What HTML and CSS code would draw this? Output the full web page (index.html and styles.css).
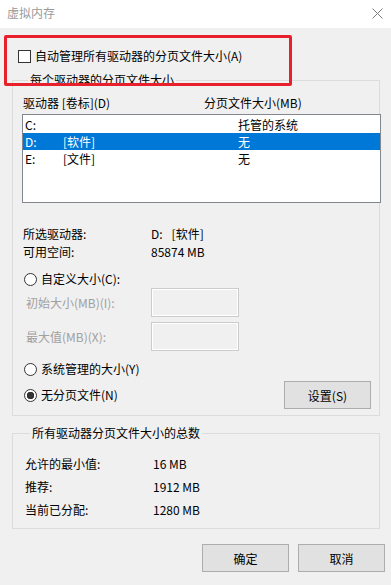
FILE: index.html
```html
<!DOCTYPE html>
<html lang="zh-CN">
<head>
<meta charset="UTF-8">
<title>虚拟内存</title>
<link rel="stylesheet" href="styles.css">
</head>
<body>
<div class="dialog">
    <div class="title-bar">
        <span class="title">虚拟内存</span>
        <svg class="close-btn" width="11" height="11" viewBox="0 0 11 11">
            <path d="M0.5 0.5 L10.5 10.5 M10.5 0.5 L0.5 10.5" stroke="#7a7a7a" stroke-width="1" fill="none"/>
        </svg>
    </div>

    <div class="content">
        <div class="check-row">
            <span class="checkbox"></span>
            <span>自动管理所有驱动器的分页文件大小(A)</span>
        </div>

        <div class="group group-drives">
            <span class="group-title">每个驱动器的分页文件大小</span>

            <div class="list-head">
                <span>驱动器 [卷标](D)</span>
                <span>分页文件大小(MB)</span>
            </div>
            <ul class="drive-list">
                <li><span>C:</span><span></span><span>托管的系统</span></li>
                <li class="active"><span>D:</span><span>[软件]</span><span>无</span></li>
                <li><span>E:</span><span>[文件]</span><span>无</span></li>
            </ul>

            <div class="info">
                <span>所选驱动器:</span><span>D:<span class="volume">[软件]</span></span>
                <span>可用空间:</span><span>85874 MB</span>
            </div>

            <div class="radio-row first">
                <span class="radio"></span>
                <span>自定义大小(C):</span>
            </div>
            <div class="size-row">
                <span class="size-label">初始大小(MB)(I):</span>
                <span class="size-input"></span>
            </div>
            <div class="size-row">
                <span class="size-label">最大值(MB)(X):</span>
                <span class="size-input"></span>
            </div>
            <div class="radio-row">
                <span class="radio"></span>
                <span>系统管理的大小(Y)</span>
            </div>
            <div class="radio-row last">
                <div class="radio-label">
                    <span class="radio checked"></span>
                    <span>无分页文件(N)</span>
                </div>
                <button class="btn btn-set">设置(S)</button>
            </div>
        </div>

        <div class="group group-total">
            <span class="group-title">所有驱动器分页文件大小的总数</span>
            <div class="total">
                <span>允许的最小值:</span><span>16 MB</span>
                <span>推荐:</span><span>1912 MB</span>
                <span>当前已分配:</span><span>1280 MB</span>
            </div>
        </div>

        <div class="footer">
            <button class="btn">确定</button>
            <button class="btn">取消</button>
        </div>
    </div>

    <!-- 红色标注框 -->
    <div class="mark"></div>
</div>
</body>
</html>
```

FILE: styles.css
```css
* {
    margin: 0;
    padding: 0;
    box-sizing: border-box;
}
ul,ol {
    list-style: none;
}
body {
    background-color: #f0f0f0;
    font-family: "Noto Sans CJK SC", "DejaVu Sans", sans-serif;
    font-size: 12px;
    color: #000;
}
.dialog {
    position: relative;
    width: 391px;
    height: 585px;
    overflow: hidden;
    background-color: #f0f0f0;
}

/* 标题栏 */
.title-bar {
    display: flex;
    align-items: center;
    justify-content: space-between;
    height: 28px;
    padding: 0 8px 2px 7px;
    background-color: #fff;
}
.title {
    color: #999;
    line-height: 16px;
}
.close-btn {
    display: block;
}

.content {
    padding-top: 20px;
}

/* 复选框 */
.check-row {
    display: flex;
    align-items: center;
    gap: 4px;
    height: 16px;
    padding-left: 18px;
    line-height: 16px;
}
.checkbox {
    width: 13px;
    height: 13px;
    background-color: #fff;
    border: 1px solid #333;
}

/* 分组框 */
.group {
    display: flex;
    flex-direction: column;
    margin-left: 12px;
    width: 368px;
    border: 1px solid #dcdcdc;
}
.group-title {
    align-self: flex-start;
    margin: -9px 0 0 5px;
    padding: 0 2px;
    line-height: 16px;
    background-color: #f0f0f0;
}
.group-drives {
    margin-top: 16px;
    padding: 0 0 6px 10px;
}
.list-head {
    display: grid;
    grid-template-columns: 181px 1fr;
    margin-top: 7px;
    line-height: 16px;
}

/* 驱动器列表 */
.drive-list {
    margin: 3px 0 0 -1px;
    width: 359px;
    height: 89px;
    padding: 1px 0;
    background-color: #fff;
    border: 1px solid #828790;
}
.drive-list li {
    display: grid;
    grid-template-columns: 38px 175px 1fr;
    height: 17px;
    padding-left: 2px;
    line-height: 17px;
}
.drive-list li.active {
    color: #fff;
    background-color: #0078d7;
}

.info {
    display: grid;
    grid-template-columns: 128px 1fr;
    margin-top: 22px;
    line-height: 18px;
}
.volume {
    margin-left: 9px;
}

/* 单选按钮 */
.radio-row {
    display: flex;
    align-items: center;
    gap: 4px;
    margin-top: 10px;
    padding-left: 1px;
    line-height: 16px;
}
.radio-row.last {
    justify-content: space-between;
    margin-top: 4px;
    padding-right: 8px;
}
.radio-label {
    display: flex;
    align-items: center;
    gap: 4px;
}
.radio {
    width: 13px;
    height: 13px;
    background-color: #fff;
    border: 1px solid #333;
    border-radius: 50%;
}
.radio.checked {
    background: radial-gradient(circle, #333 3.5px, #fff 4px);
}

.size-row {
    display: flex;
    align-items: center;
    margin-top: 5px;
    padding-left: 3px;
}
.radio-row.first + .size-row {
    margin-top: 1px;
}
.size-label {
    width: 125px;
    color: #a0a0a0;
    line-height: 16px;
}
.size-input {
    width: 88px;
    height: 29px;
    border: 1px solid #ccc;
    box-shadow: inset 0 0 0 1px #fff;
}

/* 按钮 */
.btn {
    width: 87px;
    height: 28px;
    font-family: inherit;
    font-size: 12px;
    color: #000;
    background-color: #e1e1e1;
    border: 1px solid #adadad;
}

/* 总数 */
.group-total {
    margin-top: 17px;
    padding: 0 0 7px 12px;
}
.total {
    display: grid;
    grid-template-columns: 128px 1fr;
    margin-top: 11px;
    line-height: 23px;
}

.footer {
    display: flex;
    justify-content: flex-end;
    gap: 9px;
    margin-top: 15px;
    padding-right: 6px;
}

/* 标注 */
.mark {
    position: absolute;
    left: 4px;
    top: 35px;
    width: 288px;
    height: 51px;
    border: 3px solid #e8202c;
    border-radius: 2px;
}
```
